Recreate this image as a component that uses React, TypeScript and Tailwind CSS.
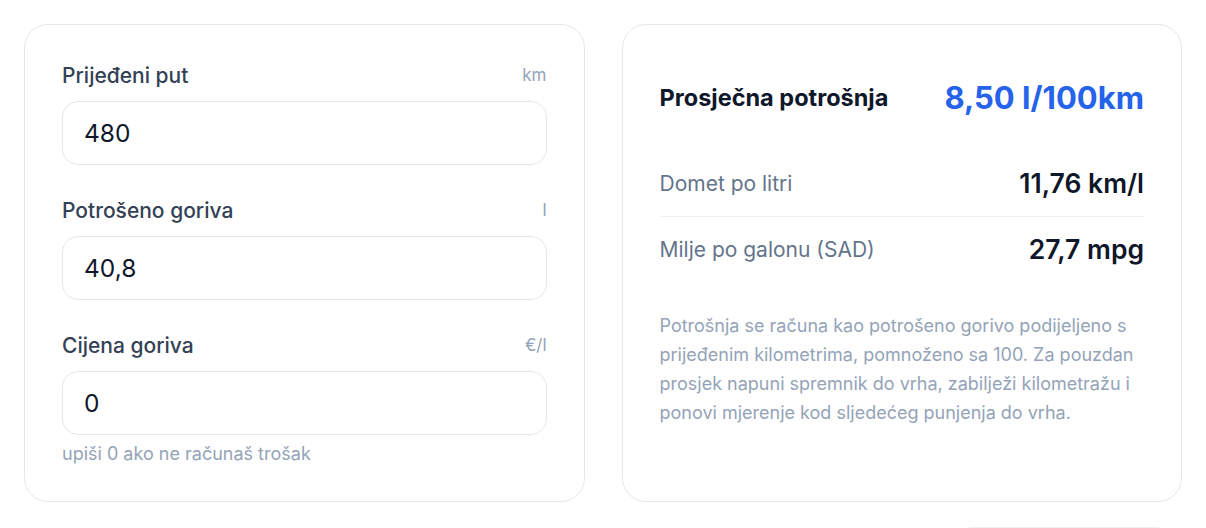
import React, { useState } from 'react';

const font = { fontFamily: 'Inter, "Noto Sans", sans-serif' };

function Field({ label, unit, value, onChange, hint }: { label: string; unit: string; value: string; onChange: (v: string) => void; hint?: string }) {
  return (
    <div className="flex flex-col">
      <div className="flex items-center justify-between h-[28px]">
        <span className="text-[21px] font-medium text-[#334155]">{label}</span>
        <span className="text-[17px] text-[#94a3b8]">{unit}</span>
      </div>
      <input
        value={value}
        onChange={(e) => onChange(e.target.value)}
        className="mt-[11px] h-[64px] w-full rounded-2xl border border-[#e2e8f0] bg-white px-[21px] text-[24.5px] text-[#0f172a] outline-none"
        style={font}
      />
      {hint && <span className="mt-[9px] text-[18px] leading-[20px] text-[#94a3b8]">{hint}</span>}
    </div>
  );
}

export default function App() {
  const [km, setKm] = useState('480');
  const [fuel, setFuel] = useState('40,8');
  const [price, setPrice] = useState('0');

  return (
    <div className="min-h-screen bg-white px-6 pt-6" style={font}>
      <div className="grid grid-cols-2 gap-[37px]">
        {/* ---- Inputs ---- */}
        <div className="rounded-[24px] border border-[#e5e7eb] bg-white px-[37px] pt-[37px] pb-[37px] flex flex-col gap-[32px]">
          <Field label="Prijeđeni put" unit="km" value={km} onChange={setKm} />
          <Field label="Potrošeno goriva" unit="l" value={fuel} onChange={setFuel} />
          <Field label="Cijena goriva" unit="€/l" value={price} onChange={setPrice} hint="upiši 0 ako ne računaš trošak" />
        </div>

        {/* ---- Result ---- */}
        <div className="rounded-[24px] border border-[#e5e7eb] bg-white px-[37px] pt-[37px] pb-[37px] flex flex-col">
          <div className="flex items-center justify-between h-[72px]">
            <span className="text-[23.5px] font-bold text-[#0f172a]">Prosječna potrošnja</span>
            <span className="text-[31px] font-bold text-[#2563eb]">8,50 l/100km</span>
          </div>
          <div className="mt-[17px] flex items-center justify-between h-[66px] border-b border-[#eef0f3]">
            <span className="text-[21px] text-[#64748b]">Domet po litri</span>
            <span className="text-[26.5px] font-semibold text-[#0f172a]">11,76 km/l</span>
          </div>
          <div className="flex items-center justify-between h-[66px]">
            <span className="text-[21px] text-[#64748b]">Milje po galonu (SAD)</span>
            <span className="text-[26.5px] font-semibold text-[#0f172a]">27,7 mpg</span>
          </div>
          <p className="mt-[28px] text-[18px] leading-[29px] text-[#94a3b8]">
            Potrošnja se računa kao potrošeno gorivo podijeljeno s prijeđenim kilometrima, pomnoženo sa 100. Za pouzdan prosjek napuni spremnik do vrha, zabilježi kilometražu i ponovi mjerenje kod sljedećeg punjenja do vrha.
          </p>
        </div>
      </div>

      <div className="mt-[25px] flex justify-end pr-[14px]">
        <div className="h-10 w-[208px] rounded-xl border border-[#eef0f3]" />
      </div>
    </div>
  );
}
